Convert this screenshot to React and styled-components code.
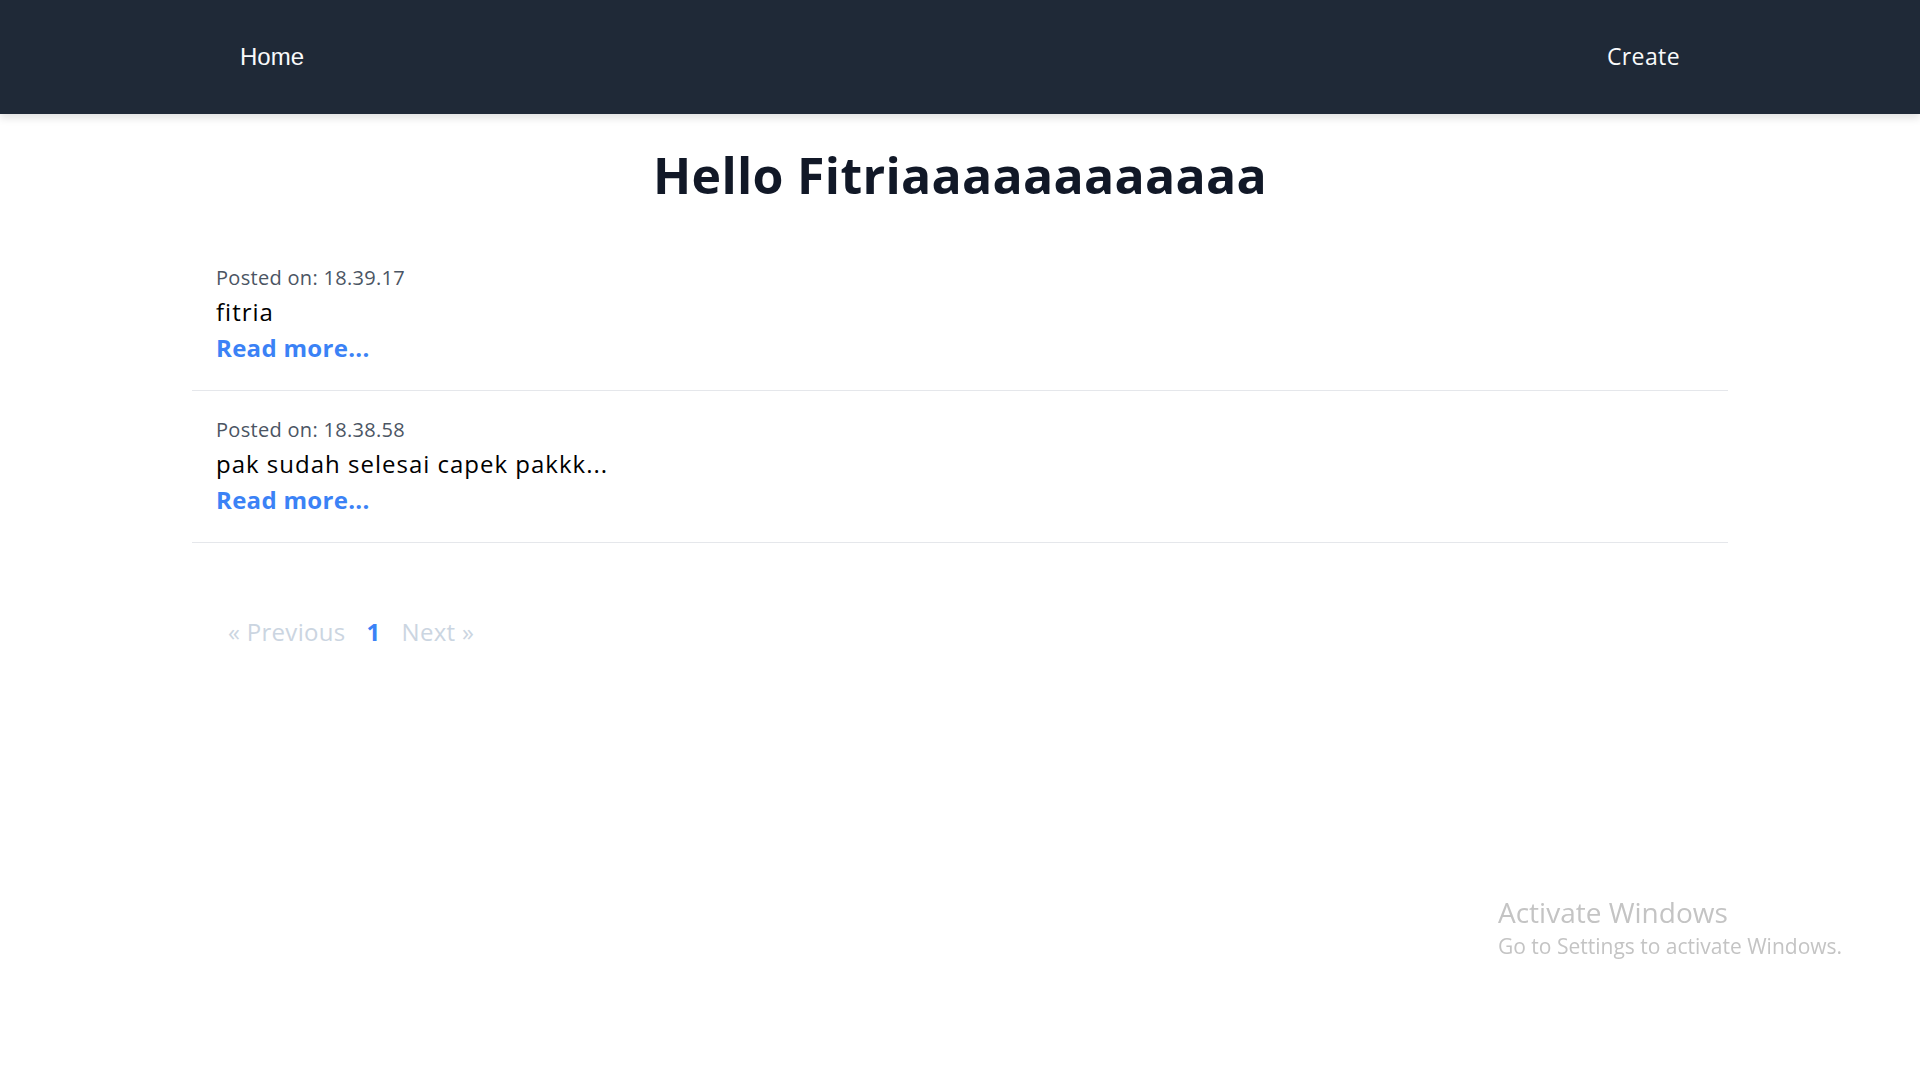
import React from 'react';
import styled, { createGlobalStyle } from 'styled-components';

const GlobalStyle = createGlobalStyle`
  body {
    margin: 0;
    background: #ffffff;
    font-family: "Open Sans", "Noto Sans", sans-serif;
  }
  a {
    text-decoration: none;
  }
`;

const Navbar = styled.nav`
  height: 114px;
  background: #1f2937;
  box-shadow: 0 4px 8px rgba(0, 0, 0, 0.12);
`;

const NavInner = styled.div`
  width: 75%;
  height: 100%;
  margin: 0 auto;
  display: flex;
  align-items: center;
  justify-content: space-between;
`;

const NavLink = styled.a`
  color: #f9fafb;
  font-size: ${(p) => (p.$plain ? '24px' : '23px')};
  line-height: 30px;
  margin-top: ${(p) => (p.$plain ? '0' : '-2px')};
  font-weight: ${(p) => (p.$plain ? 400 : 500)};
  font-family: ${(p) => (p.$plain ? '"Liberation Sans", Arial, sans-serif' : '"Open Sans", sans-serif')};
  letter-spacing: ${(p) => (p.$plain ? '0' : '0.4px')};
`;

const Main = styled.main`
  width: 80%;
  margin: 0 auto;
`;

const Title = styled.h1`
  margin: 25px 0 28px;
  text-align: center;
  font-size: 50px;
  line-height: 72px;
  font-weight: 700;
  color: #111827;
  letter-spacing: 0.3px;
`;

const PostList = styled.ul`
  list-style: none;
  margin: 0;
  padding: 0;
`;

const PostItem = styled.li`
  padding: 24px 24px 24px;
  border-bottom: 1px solid #e5e7eb;
`;

const PostDate = styled.p`
  margin: 0;
  font-size: 20px;
  line-height: 30px;
  letter-spacing: 0.3px;
  color: #4b5563;
`;

const PostTitle = styled.h2`
  margin: 3px 0 0;
  font-size: 24px;
  line-height: 32px;
  font-weight: 500;
  letter-spacing: 1px;
  color: #000000;
`;

const ReadMore = styled.a`
  display: block;
  margin-top: 2px;
  font-size: 24px;
  line-height: 36px;
  font-weight: 700;
  letter-spacing: 0.3px;
  color: #3b82f6;
`;

const Pagination = styled.div`
  display: flex;
  align-items: center;
  gap: 21px;
  margin-top: 71px;
  padding-left: 36px;
`;

const PageLink = styled.a`
  font-size: 24px;
  line-height: 36px;
  letter-spacing: 0.3px;
  font-weight: ${(p) => (p.$active ? 700 : 400)};
  color: ${(p) => (p.$active ? '#3b82f6' : '#cbd5e1')};
`;

const Watermark = styled.div`
  position: fixed;
  left: 1498px;
  top: 893px;
  color: #c4c4c4;
  font-family: "Open Sans", sans-serif;
  pointer-events: none;
`;

const WatermarkTitle = styled.div`
  font-size: 28px;
  line-height: 38px;
`;

const WatermarkText = styled.div`
  font-size: 21px;
  line-height: 30px;
`;

const posts = [
  { id: 1, time: '18.39.17', title: 'fitria' },
  { id: 2, time: '18.38.58', title: 'pak sudah selesai capek pakkk...' },
];

export default function App() {
  return (
    <>
      <GlobalStyle />
      <Navbar>
        <NavInner>
          <NavLink href="#" $plain>Home</NavLink>
          <NavLink href="#">Create</NavLink>
        </NavInner>
      </Navbar>
      <Main>
        <Title>Hello Fitriaaaaaaaaaaaa</Title>
        <PostList>
          {posts.map((post) => (
            <PostItem key={post.id}>
              <PostDate>Posted on: {post.time}</PostDate>
              <PostTitle>{post.title}</PostTitle>
              <ReadMore href="#">Read more...</ReadMore>
            </PostItem>
          ))}
        </PostList>
        <Pagination>
          <PageLink href="#">« Previous</PageLink>
          <PageLink href="#" $active>1</PageLink>
          <PageLink href="#">Next »</PageLink>
        </Pagination>
      </Main>
      <Watermark>
        <WatermarkTitle>Activate Windows</WatermarkTitle>
        <WatermarkText>Go to Settings to activate Windows.</WatermarkText>
      </Watermark>
    </>
  );
}
